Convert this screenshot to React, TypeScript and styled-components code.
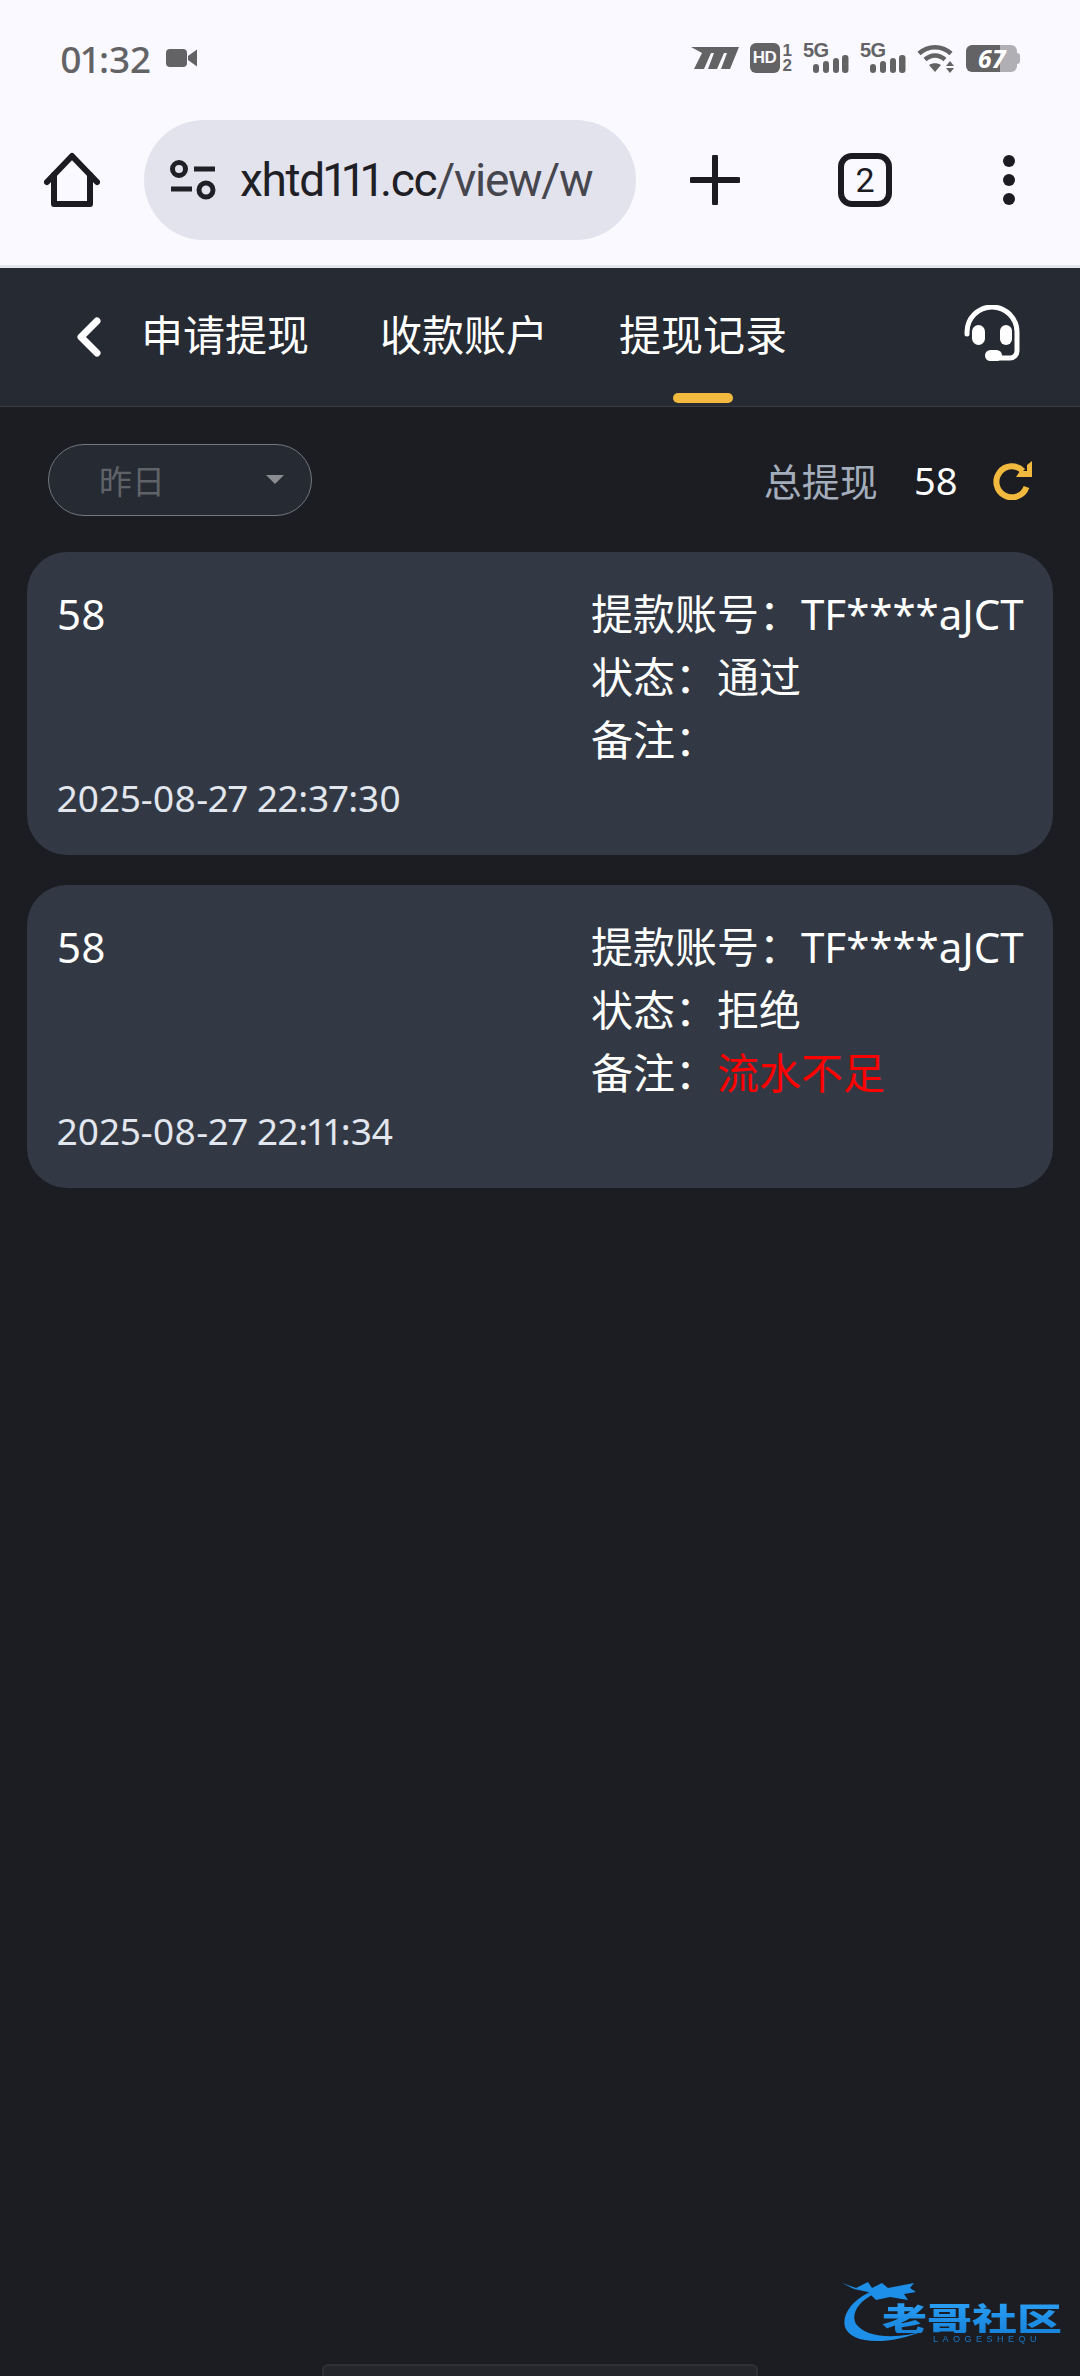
import styled, { createGlobalStyle } from 'styled-components';

interface RecordItem {
  amount: string;
  account: string;
  status: string;
  remark?: string;
  time: string;
}

const RECORDS: RecordItem[] = [
  { amount: '58', account: 'TF****aJCT', status: '通过', time: '2025-08-27 22:37:30' },
  { amount: '58', account: 'TF****aJCT', status: '拒绝', remark: '流水不足', time: '2025-08-27 22:11:34' },
];

const SignalBars = () => (
  <svg width="36" height="18" viewBox="0 0 36 18" fill="#636366">
    <rect x="0" y="9" width="6" height="9" rx="3" />
    <rect x="10" y="6" width="6" height="12" rx="3" />
    <rect x="20" y="3" width="6" height="15" rx="3" />
    <rect x="29" y="0" width="6.5" height="18" rx="3" />
  </svg>
);

const Signal = () => (
  <SignalBox>
    <SignalLabel>5G</SignalLabel>
    <SignalBarsRow>
      <SignalBars />
    </SignalBarsRow>
  </SignalBox>
);

const App = () => {
  return (
    <Page>
      <GlobalStyle />
      <StatusBar>
        <TimeGroup>
          <Time>01:32</Time>
          <svg width="32" height="20" viewBox="0 0 32 20" fill="#636366">
            <rect x="0" y="1" width="21" height="18" rx="4" />
            <path d="M22 8 L31 1.5 V18.5 L22 12 Z" />
          </svg>
        </TimeGroup>
        <StatusIcons>
          <svg width="48" height="24" viewBox="0 0 48 24" fill="#636366">
            <path d="M0 1 H48 L39 23 H30 L36 7 H33 L26 23 H17 L23 7 H20 L13 23 H3 L11 7 Z" />
          </svg>
          <HdGroup>
            <HdBadge>HD</HdBadge>
            <HdSims>
              <span>1</span>
              <span>2</span>
            </HdSims>
          </HdGroup>
          <Signal />
          <Signal />
          <svg width="38" height="29" viewBox="0 0 38 29" fill="none">
            <path d="M2 9.5 C11 1 25 1 34 9.5" stroke="#636366" strokeWidth="4.5" />
            <path d="M8 15.5 C14 10 22 10 28 15.5" stroke="#636366" strokeWidth="4.5" />
            <path d="M12 21 L18 28 L24 21 C20.5 18.5 15.5 18.5 12 21 Z" fill="#636366" />
            <path d="M33 17 L37 22 H29 Z M29 24 H37 L33 29 Z" fill="#636366" />
          </svg>
          <Battery>
            <BatteryLevel>67</BatteryLevel>
            <BatteryNub />
          </Battery>
        </StatusIcons>
      </StatusBar>

      <Toolbar>
        <ToolButton $width={144}>
          <svg width="56" height="56" viewBox="0 0 56 56" fill="none" stroke="#1c1b21" strokeWidth="6" strokeLinejoin="round" strokeLinecap="round">
            <path d="M3 30 L28 4 L53 30" />
            <path d="M10 23 V52 H46 V23" />
          </svg>
        </ToolButton>
        <UrlPill>
          <svg width="46" height="40" viewBox="0 0 46 40" fill="none" stroke="#1f2026" strokeWidth="5">
            <circle cx="9" cy="9" r="6.5" />
            <path d="M24 9 H45" />
            <path d="M1 29 H22" />
            <circle cx="36" cy="30" r="7" />
          </svg>
          <UrlText>
            xhtd111.cc<UrlPath>/view/w</UrlPath>
          </UrlText>
        </UrlPill>
        <ToolButton $width={157}>
          <svg width="50" height="50" viewBox="0 0 50 50" stroke="#1c1b21" strokeWidth="6" strokeLinecap="round">
            <path d="M25 2 V48" />
            <path d="M2 25 H48" />
          </svg>
        </ToolButton>
        <ToolButton $width={144}>
          <TabCount>2</TabCount>
        </ToolButton>
        <ToolButton $width={143}>
          <svg width="14" height="50" viewBox="0 0 14 50" fill="#1c1b21">
            <circle cx="7" cy="6" r="6" />
            <circle cx="7" cy="25" r="6" />
            <circle cx="7" cy="44" r="6" />
          </svg>
        </ToolButton>
      </Toolbar>

      <Header>
        <BackButton>
          <svg width="26" height="40" viewBox="0 0 26 40" fill="none" stroke="#fff" strokeWidth="7" strokeLinecap="round" strokeLinejoin="round">
            <path d="M21 4 L5 20 L21 36" />
          </svg>
        </BackButton>
        <Tabs>
          <Tab>申请提现</Tab>
          <Tab>收款账户</Tab>
          <Tab $active>提现记录</Tab>
        </Tabs>
        <SupportButton>
          <svg width="56" height="56" viewBox="0 0 56 56" fill="none">
            <path d="M3 29 V27 a25 25 0 0 1 50 0 V46 a7 7 0 0 1 -7 7 H30" stroke="#fff" strokeWidth="5" strokeLinecap="round" />
            <rect x="8" y="20" width="13" height="20" rx="6.5" fill="#fff" />
            <rect x="36" y="20" width="12" height="20" rx="6" fill="#fff" />
            <rect x="21" y="45" width="17" height="11" rx="5.5" fill="#fff" />
          </svg>
        </SupportButton>
      </Header>

      <FilterRow>
        <DateSelect>
          <span>昨日</span>
          <Caret />
        </DateSelect>
        <Summary>
          <SummaryLabel>总提现</SummaryLabel>
          <SummaryValue>58</SummaryValue>
          <svg width="40" height="40" viewBox="0 0 40 40" fill="none">
            <path d="M30 11 A15.5 15.5 0 1 0 33.5 27" stroke="#f2b93f" strokeWidth="6" />
            <path d="M39 1 V17 H23 L27 11 H34 V5 Z" fill="#f2b93f" />
          </svg>
        </Summary>
      </FilterRow>

      <RecordList>
        {RECORDS.map((item) => (
          <RecordCard key={item.time}>
            <RecordLeft>
              <Amount>{item.amount}</Amount>
              <RecordTime>{item.time}</RecordTime>
            </RecordLeft>
            <RecordRight>
              <InfoLine>提款账号：{item.account}</InfoLine>
              <InfoLine>状态：{item.status}</InfoLine>
              <InfoLine>
                备注：<Remark>{item.remark}</Remark>
              </InfoLine>
            </RecordRight>
          </RecordCard>
        ))}
      </RecordList>

      <HomeIndicator />

      <Watermark>
        <svg width="96" height="68" viewBox="0 0 96 68" fill="none">
          <path d="M26 13 C8 22 0 36 3 47 C8 62 40 68 84 50 C56 60 24 58 14 44 C9 35 15 22 32 14 Z" fill="#1d8fe8" />
          <path d="M0 3 L14 8 L26 2 L30 8 L40 3 L46 8 L72 3 L68 8 L74 12 L62 14 L66 20 L48 17 L34 20 L26 12 L12 9 Z" fill="#1d8fe8" />
        </svg>
        <WatermarkName>老哥社区</WatermarkName>
        <WatermarkSub>LAOGESHEQU</WatermarkSub>
      </Watermark>
    </Page>
  );
};

export default App;

const FONT = `'Noto Sans', 'Noto Sans CJK SC', sans-serif`;

const GlobalStyle = createGlobalStyle`
  html, body {
    margin: 0;
    padding: 0;
    background: #1c1d22;
  }
  * {
    box-sizing: border-box;
  }
`;

const Page = styled.div`
  position: relative;
  display: flex;
  flex-direction: column;
  width: 1080px;
  height: 2376px;
  overflow: hidden;
  background: #1c1d22;
  font-family: ${FONT};
  font-variant-numeric: proportional-nums;
`;

const StatusBar = styled.div`
  display: flex;
  justify-content: space-between;
  align-items: center;
  height: 116px;
  padding: 0 60px 0 60px;
  background: #f9f9ff;
`;

const TimeGroup = styled.div`
  display: flex;
  align-items: center;
  gap: 15px;
`;

const Time = styled.span`
  font-size: 37px;
  font-weight: 500;
  color: #636366;
`;

const StatusIcons = styled.div`
  display: flex;
  align-items: center;
  gap: 11px;
`;

const HdGroup = styled.div`
  display: flex;
  align-items: center;
  gap: 3px;
`;

const HdBadge = styled.div`
  display: flex;
  align-items: center;
  justify-content: center;
  width: 30px;
  height: 30px;
  border-radius: 6px;
  background: #636366;
  color: #f9f9ff;
  font-family: 'Liberation Sans', sans-serif;
  font-size: 17px;
  font-weight: 700;
  letter-spacing: -0.5px;
`;

const HdSims = styled.div`
  display: flex;
  flex-direction: column;
  color: #636366;
  font-family: 'Liberation Sans', sans-serif;
  font-size: 17px;
  font-weight: 700;
  line-height: 15px;
  text-align: center;
`;

const SignalBox = styled.div`
  display: flex;
  flex-direction: column;
  width: 46px;
  height: 30px;
`;

const SignalLabel = styled.span`
  color: #636366;
  font-family: 'Liberation Sans', sans-serif;
  font-size: 20px;
  font-weight: 700;
  line-height: 15px;
  letter-spacing: -0.5px;
`;

const SignalBarsRow = styled.div`
  display: flex;
  justify-content: flex-end;
  margin-top: -3px;
`;

const Battery = styled.div`
  display: flex;
  align-items: center;
`;

const BatteryLevel = styled.div`
  width: 51px;
  height: 27px;
  padding-left: 12px;
  border-radius: 6px;
  background: linear-gradient(90deg, #636366 0 66%, #b0afb4 66% 100%);
  color: #fff;
  font-size: 25px;
  font-style: italic;
  font-weight: 700;
  line-height: 27px;
`;

const BatteryNub = styled.div`
  width: 3px;
  height: 11px;
  border-radius: 0 3px 3px 0;
  background: #b0afb4;
`;

const Toolbar = styled.div`
  display: flex;
  align-items: flex-start;
  height: 152px;
  padding-top: 4px;
  background: #f9f9ff;
  border-bottom: 3px solid #e4e6ee;
`;

const ToolButton = styled.div<{ $width: number }>`
  display: flex;
  align-items: center;
  justify-content: center;
  flex: none;
  width: ${(props) => props.$width}px;
  height: 120px;
`;

const UrlPill = styled.div`
  display: flex;
  align-items: center;
  flex: none;
  gap: 24px;
  width: 492px;
  height: 120px;
  padding: 0 24px 0 26px;
  border-radius: 60px;
  background: #e3e3ed;
  overflow: hidden;
  svg {
    flex: none;
  }
`;

const UrlText = styled.span`
  font-family: Roboto, sans-serif;
  font-size: 46px;
  letter-spacing: -1.3px;
  color: #1f2026;
  white-space: nowrap;
`;

const UrlPath = styled.span`
  color: #46464f;
`;

const TabCount = styled.div`
  display: flex;
  align-items: center;
  justify-content: center;
  width: 54px;
  height: 54px;
  border: 6px solid #1c1b21;
  border-radius: 14px;
  color: #1c1b21;
  font-family: Roboto, sans-serif;
  font-size: 34px;
`;

const Header = styled.div`
  display: flex;
  align-items: center;
  height: 139px;
  padding: 0 60px 0 76px;
  background: #262a32;
  border-bottom: 1px solid #393c42;
`;

const BackButton = styled.div`
  display: flex;
  width: 65px;
`;

const Tabs = styled.div`
  display: flex;
  flex: 1;
  gap: 71px;
  height: 100%;
`;

const Tab = styled.div<{ $active?: boolean }>`
  position: relative;
  display: flex;
  align-items: center;
  padding-bottom: 9px;
  color: #fff;
  font-size: 42px;
  &::after {
    content: '';
    display: ${(props) => (props.$active ? 'block' : 'none')};
    position: absolute;
    left: 54px;
    bottom: 3px;
    width: 60px;
    height: 10px;
    border-radius: 5px;
    background: #f2b93f;
  }
`;

const SupportButton = styled.div`
  display: flex;
  margin-bottom: 9px;
`;

const FilterRow = styled.div`
  display: flex;
  justify-content: space-between;
  align-items: center;
  height: 145px;
  padding: 0 47px 0 48px;
`;

const DateSelect = styled.div`
  display: flex;
  align-items: center;
  justify-content: space-between;
  width: 264px;
  height: 72px;
  padding: 0 27px 0 50px;
  border: 1px solid #74777d;
  border-radius: 36px;
  background: #262a32;
  color: #5f6369;
  font-size: 33px;
`;

const Caret = styled.i`
  width: 0;
  height: 0;
  border-left: 9px solid transparent;
  border-right: 9px solid transparent;
  border-top: 9px solid #8a8c91;
`;

const Summary = styled.div`
  display: flex;
  align-items: center;
`;

const SummaryLabel = styled.span`
  color: #a3adbb;
  font-size: 38px;
`;

const SummaryValue = styled.span`
  margin: 0 35px 0 36px;
  color: #fff;
  font-size: 38px;
`;

const RecordList = styled.div`
  display: flex;
  flex-direction: column;
  gap: 30px;
  padding: 0 27px;
`;

const RecordCard = styled.div`
  display: flex;
  justify-content: space-between;
  height: 303px;
  padding: 30px 30px 0 30px;
  border-radius: 40px;
  background: #323944;
`;

const RecordLeft = styled.div`
  display: flex;
  flex-direction: column;
  justify-content: space-between;
  height: 240px;
`;

const Amount = styled.div`
  color: #fff;
  font-size: 42px;
  line-height: 63px;
`;

const RecordTime = styled.div`
  color: #e2e6ee;
  font-size: 37px;
  line-height: 48px;
`;

const RecordRight = styled.div`
  display: flex;
  flex-direction: column;
  width: 432px;
`;

const InfoLine = styled.div`
  color: #fff;
  font-size: 42px;
  line-height: 63px;
  white-space: nowrap;
`;

const Remark = styled.span`
  color: #ff0000;
`;

const HomeIndicator = styled.div`
  width: 436px;
  height: 12px;
  margin: auto auto 0;
  border: 2px solid #2e3035;
  border-bottom: 0;
  border-radius: 6px 6px 0 0;
  background: #24262b;
`;

const Watermark = styled.div`
  position: absolute;
  left: 842px;
  top: 2280px;
  width: 226px;
  height: 70px;
  filter: blur(0.5px);
  svg {
    position: absolute;
    left: 0;
    top: 0;
  }
`;

const WatermarkName = styled.div`
  position: absolute;
  left: 40px;
  top: 21px;
  background: linear-gradient(180deg, #2a9ff5, #1884dc);
  -webkit-background-clip: text;
  background-clip: text;
  color: transparent;
  font-family: 'Noto Sans CJK SC', sans-serif;
  font-size: 45px;
  font-weight: 900;
  line-height: 45px;
  white-space: nowrap;
  transform: scaleY(0.72);
  transform-origin: left top;
`;

const WatermarkSub = styled.div`
  position: absolute;
  left: 91px;
  top: 54px;
  color: #1a78c4;
  font-family: 'Liberation Sans', sans-serif;
  font-size: 9px;
  letter-spacing: 4.5px;
  line-height: 10px;
  white-space: nowrap;
`;
